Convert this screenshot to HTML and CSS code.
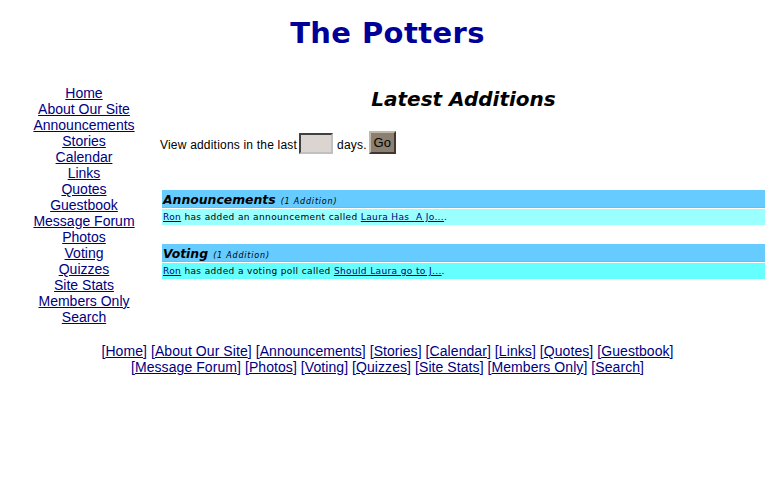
FILE: index.html
```html
<!DOCTYPE html>
<html>
<head>
<meta charset="utf-8">
<title>The Potters</title>
<link rel="stylesheet" href="styles.css">
</head>
<body>
<div class="title">The Potters</div>
<div class="layout">
  <nav class="sidenav">
    <a href="#">Home</a>
    <a href="#">About Our Site</a>
    <a href="#">Announcements</a>
    <a href="#">Stories</a>
    <a href="#">Calendar</a>
    <a href="#">Links</a>
    <a href="#">Quotes</a>
    <a href="#">Guestbook</a>
    <a href="#">Message Forum</a>
    <a href="#">Photos</a>
    <a href="#">Voting</a>
    <a href="#">Quizzes</a>
    <a href="#">Site Stats</a>
    <a href="#">Members Only</a>
    <a href="#">Search</a>
  </nav>
  <main class="main">
    <div class="heading">Latest Additions</div>
    <form class="filter">
      <span>View additions in the last</span>
      <input class="days" type="text">
      <span>days.</span>
      <button class="go" type="button">Go</button>
    </form>
    <section class="group">
      <div class="ghead"><span class="gname">Announcements</span> <span class="gcount">(1 Addition)</span></div>
      <div class="grow row-a"><a href="#">Ron</a> has added an announcement called <a href="#">Laura Has&nbsp; A Jo...</a>.</div>
    </section>
    <section class="group">
      <div class="ghead"><span class="gname">Voting</span> <span class="gcount">(1 Addition)</span></div>
      <div class="grow row-b"><a href="#">Ron</a> has added a voting poll called <a href="#">Should Laura go to J...</a>.</div>
    </section>
  </main>
</div>
<div class="footer">
  <div>[<a href="#">Home</a>] [<a href="#">About Our Site</a>] [<a href="#">Announcements</a>] [<a href="#">Stories</a>] [<a href="#">Calendar</a>] [<a href="#">Links</a>] [<a href="#">Quotes</a>] [<a href="#">Guestbook</a>]</div>
  <div>[<a href="#">Message Forum</a>] [<a href="#">Photos</a>] [<a href="#">Voting</a>] [<a href="#">Quizzes</a>] [<a href="#">Site Stats</a>] [<a href="#">Members Only</a>] [<a href="#">Search</a>]</div>
</div>
</body>
</html>
```
FILE: styles.css
```css
body {
  margin: 8px;
  background: #ffffff;
  font-family: "Liberation Sans", Arial, sans-serif;
  color: #000000;
}
a { color: #000080; }
.title {
  text-align: center;
  font-family: "DejaVu Sans", Verdana, sans-serif;
  font-weight: bold;
  font-size: 29px;
  letter-spacing: 0.4px;
  line-height: 34px;
  color: #000099;
  margin-top: 8px;
}
.layout {
  display: flex;
  margin-top: 35px;
}
.sidenav {
  width: 152px;
  flex: none;
  display: flex;
  flex-direction: column;
  align-items: center;
  font-size: 14px;
  line-height: 16px;
}
.main {
  flex: 1;
}
.heading {
  text-align: center;
  font-family: "DejaVu Sans", Verdana, sans-serif;
  font-weight: bold;
  font-style: italic;
  font-size: 20px;
  line-height: 24px;
  margin-top: 2px;
}
.filter {
  display: flex;
  align-items: flex-end;
  font-size: 12px;
  letter-spacing: 0.2px;
  margin-top: 19px;
  height: 24px;
}
.filter span { line-height: 16px; margin-bottom: 1px; }
.days {
  width: 34px;
  height: 21px;
  box-sizing: border-box;
  margin: 0 4px 0 2px;
  padding: 0;
  border: 2px solid #404040;
  border-right-color: #c0c0c0;
  border-bottom-color: #c0c0c0;
  background: #dcd4d0;
}
.go {
  margin-left: 2px;
  height: 23px;
  width: 27px;
  padding: 0;
  border: 2px solid;
  border-color: #c0b8a8 #403830 #403830 #c0b8a8;
  background: #8c8070;
  font-family: "Liberation Sans", Arial, sans-serif;
  font-size: 13px;
  color: #000000;
}
.group {
  margin: 0 0 0 2px;
  width: 603px;
}
.group + .group { margin-top: 19px; }
.group:first-of-type { margin-top: 36px; }
.ghead {
  background: #66ccff;
  height: 17px;
  line-height: 18px;
  border-bottom: 1px solid #88b0d8;
  padding-left: 1px;
  font-family: "DejaVu Sans", Verdana, sans-serif;
  font-style: italic;
  white-space: nowrap;
}
.gname {
  font-weight: bold;
  font-size: 12.4px;
}
.gcount { font-size: 8px; letter-spacing: 0.8px; }
.grow {
  margin-top: 1px;
  height: 16px;
  line-height: 16px;
  padding-left: 1px;
  font-family: "DejaVu Sans", Verdana, sans-serif;
  font-size: 9px;
  letter-spacing: 0.37px;
}
.row-a { background: #99ffff; }
.row-b { background: #66ffff; }
.footer {
  text-align: center;
  font-size: 14px;
  line-height: 16px;
  letter-spacing: 0.07px;
  margin-top: 18px;
  color: #000080;
}
```
